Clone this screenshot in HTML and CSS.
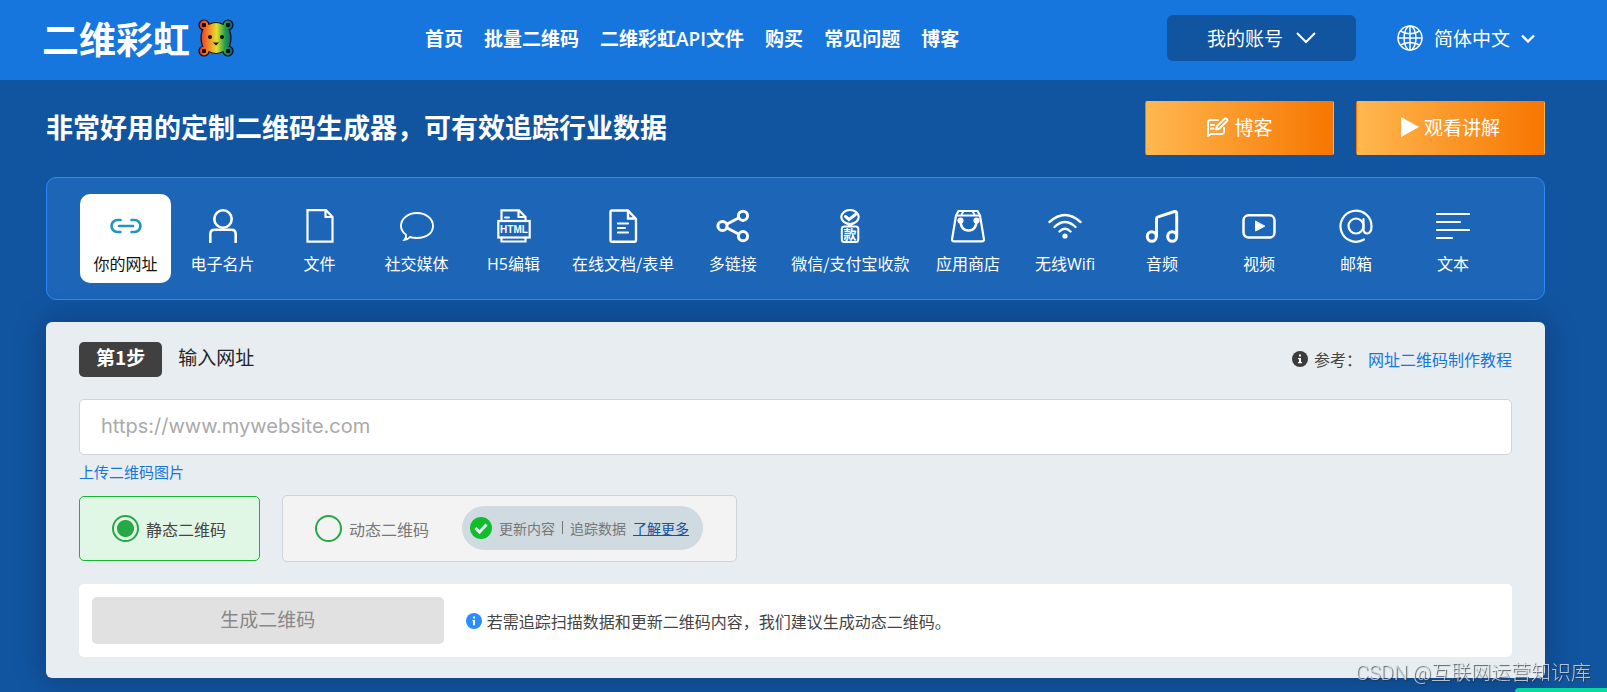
FILE: index.html
```
<!DOCTYPE html>
<html lang="zh-CN">
<head>
<meta charset="utf-8">
<meta name="viewport" content="width=device-width, initial-scale=1">
<title>二维彩虹</title>
<link rel="stylesheet" href="styles.css">
</head>
<body>
<header class="topbar">
  <a class="brand" href="#">
    <span>二维彩虹</span>
    <svg class="bear" viewBox="0 0 36 38" aria-hidden="true">
      <defs>
        <linearGradient id="rainbow" gradientUnits="userSpaceOnUse" x1="0" y1="0" x2="36" y2="0">
          <stop offset="0.08" stop-color="#ee3a24"/>
          <stop offset="0.3" stop-color="#f5882a"/>
          <stop offset="0.52" stop-color="#e3e02a"/>
          <stop offset="0.75" stop-color="#1fa04a"/>
          <stop offset="0.95" stop-color="#1c4f96"/>
        </linearGradient>
      </defs>
      <g fill="url(#rainbow)" stroke="#111" stroke-width="1.2">
        <circle cx="6" cy="6" r="5"/><circle cx="30" cy="6" r="5"/>
        <circle cx="6" cy="32" r="5"/><circle cx="30" cy="32" r="5"/>
      </g>
      <path d="M18 3.500C23 3.500 26 5 28.500 8.500C32 12 33 15 33 19C33 23 32 26 28.500 30C26 33.500 23 34.500 18 34.500C13 34.500 10 33.500 7.500 30C4 26 3 23 3 19C3 15 4 12 7.500 8.500C10 5 13 3.500 18 3.500Z" fill="url(#rainbow)"/>
      <path d="M10.500 5.500Q18 1.500 25.500 5.500M10.500 32.500Q18 36.500 25.500 32.500M4.500 11Q1.500 19 4.500 27M31.500 11Q34.500 19 31.500 27" fill="none" stroke="#111" stroke-width="1.200"/>
      <g fill="#111">
        <rect x="4" y="4" width="4" height="4" rx="1"/><rect x="28" y="4" width="4" height="4" rx="1"/>
        <rect x="4" y="30" width="4" height="4" rx="1"/><rect x="28" y="30" width="4" height="4" rx="1"/>
        <circle cx="12" cy="18" r="2"/><circle cx="24" cy="18" r="2"/>
        <path d="M15 23.500H21L18 26.500Z"/>
      </g>
    </svg>
  </a>
  <nav class="nav">
    <a href="#">首页</a>
    <a href="#">批量二维码</a>
    <a href="#">二维彩虹<span class="latin">API</span>文件</a>
    <a href="#">购买</a>
    <a href="#">常见问题</a>
    <a href="#">博客</a>
  </nav>
  <div class="account">
    <button class="account-btn" type="button">我的账号
      <svg width="20" height="12" viewBox="0 0 20 12" aria-hidden="true"><path d="M1 1L10 10L19 1" fill="none" stroke="#fff" stroke-width="2"/></svg>
    </button>
    <button class="lang-btn" type="button">
      <svg width="26" height="26" viewBox="0 0 26 26" fill="none" stroke="#fff" stroke-width="1.5" aria-hidden="true">
        <circle cx="13" cy="13" r="12"/><ellipse cx="13" cy="13" rx="6" ry="12"/>
        <path d="M13 1V25M1 13H25M3.500 6C9 9.500 17 9.500 22.500 6M3.500 20C9 16.500 17 16.500 22.500 20"/>
      </svg>
      <span>简体中文</span>
      <svg width="14" height="9" viewBox="0 0 14 9" aria-hidden="true"><path d="M1 1.500L7 7.500L13 1.500" fill="none" stroke="#fff" stroke-width="2.400"/></svg>
    </button>
  </div>
</header>

<main class="page">
  <div class="hero">
    <h1>非常好用的定制二维码生成器，可有效追踪行业数据</h1>
    <div class="hero-actions">
      <button class="cta" type="button">
        <svg width="23" height="20" viewBox="0 0 23 20" fill="none" stroke="#fff" stroke-width="2" stroke-linejoin="round" stroke-linecap="round" aria-hidden="true">
          <path d="M12 3H4.500Q2 3 2 5.500V19L5 17H15.500Q18 17 18 14.500V11"/>
          <path d="M10 12.500L11 9L19 1.500Q21 1 21.500 3.500L13.500 11.500Z"/><path d="M5 8H8M5 11.500H7.500"/>
        </svg>
        博客
      </button>
      <button class="cta" type="button">
        <svg width="18" height="20" viewBox="0 0 18 20" aria-hidden="true"><path d="M0 0L18 10L0 20Z" fill="#fff"/></svg>
        观看讲解
      </button>
    </div>
  </div>

  <nav class="types">
    <a class="type active" href="#">
      <svg viewBox="0 0 34 34"><path d="M11.500 11H8.500A6 6 0 0 0 8.500 23H11.500M22.500 11H25.500A6 6 0 0 1 25.500 23H22.500M10 17H24" stroke-width="2.600"/></svg>
      <span>你的网址</span>
    </a>
    <a class="type" href="#">
      <svg viewBox="0 0 34 34"><circle cx="17" cy="10" r="8.700" stroke-width="2.600"/><path d="M4.300 34V25Q4.300 20.700 8.500 20.700H25.500Q29.700 20.700 29.700 25V34" stroke-width="2.600" stroke-linecap="butt"/></svg>
      <span>电子名片</span>
    </a>
    <a class="type" href="#">
      <svg viewBox="0 0 34 34"><path d="M4.500 1.200H23L29.500 8V32.700H4.500ZM22.500 1.500V8H29" stroke-width="2.200"/></svg>
      <span>文件</span>
    </a>
    <a class="type" href="#">
      <svg viewBox="0 0 34 34"><path d="M17 4C26 4 33 9.500 33 17C33 24.500 26 29 17 29C14.500 29 12 28.700 10 28Q8 30.500 4.500 30.800Q6.500 28.500 6 25.700C3 23.500 1 20.500 1 17C1 9.500 8 4 17 4Z" stroke-width="1.900"/></svg>
      <span>社交媒体</span>
    </a>
    <a class="type" href="#">
      <svg viewBox="0 0 34 34"><path d="M4.500 12V1.300H22L28.500 8V12M21.500 1.500V8H28M4.500 28.500V32.500H28.500V28.500" stroke-width="2.200"/><path d="M8 8.500H12" stroke-width="2"/><rect x="1.300" y="12" width="31.400" height="16.500" stroke-width="2.200"/><text x="17" y="24" class="icon-text" font-size="10">HTML</text></svg>
      <span><span class="latin">H5</span>编辑</span>
    </a>
    <a class="type" href="#">
      <svg viewBox="0 0 34 34"><path d="M6 1.500H22L30 10V31Q30 32.700 28.500 32.700H6Q4.500 32.700 4.500 31V3Q4.500 1.500 6 1.500ZM22 2V9.500H29.500" stroke-width="2.400"/><path d="M12 14.500H22M12 19H19M12 23.500H22" stroke-width="2.200"/></svg>
      <span>在线文档/表单</span>
    </a>
    <a class="type" href="#">
      <svg viewBox="0 0 34 34"><g stroke-width="3"><circle cx="6.500" cy="17" r="4.600"/><circle cx="27" cy="6.800" r="4.600"/><circle cx="27" cy="27.200" r="4.600"/><path d="M11 15L22.500 9M11 19L22.500 25"/></g></svg>
      <span>多链接</span>
    </a>
    <a class="type" href="#">
      <svg viewBox="0 0 34 34"><ellipse cx="17" cy="8" rx="8.700" ry="7"/><path d="M12.500 7.500L16 10.500L22.500 5.500" stroke-width="3"/><path d="M14 14.500L17 17.500L20 14.500" stroke-width="1.500"/><rect x="8.800" y="17.500" width="16.500" height="15.500" rx="2.500" stroke-width="2"/><text x="17" y="30" class="icon-text" font-size="13">款</text></svg>
      <span>微信/支付宝收款</span>
    </a>
    <a class="type" href="#">
      <svg viewBox="0 0 34 34"><path d="M7.500 2H26.500L29 6.500L33 30.500Q33 32.300 31 32.300H3Q1 32.300 1 30.500L5 6.500Z" stroke-width="2.200"/><path d="M6 6.500H10L12 3M22 3L24 6.500H28M11 6.500H23" stroke-width="1.800"/><path d="M9.500 11C9.500 17.500 12 21.500 17.500 21.500C23 21.500 25.500 17.500 25.500 11" stroke-width="2.500"/><circle cx="9.500" cy="11.500" r="2" fill="currentColor"/><circle cx="25.500" cy="11.500" r="2" fill="currentColor"/></svg>
      <span>应用商店</span>
    </a>
    <a class="type" href="#">
      <svg viewBox="0 0 34 34"><path d="M1.500 13Q17 -1 32.500 13M6.500 18Q17 8 27.500 18M11.500 22.500Q17 17 22.500 22.500" stroke-width="2.400"/><circle cx="17" cy="27" r="2.600" fill="currentColor" stroke="none"/></svg>
      <span>无线<span class="latin">Wifi</span></span>
    </a>
    <a class="type" href="#">
      <svg viewBox="0 0 34 34"><g stroke-width="3"><ellipse cx="6.800" cy="27.500" rx="4.500" ry="4.800"/><ellipse cx="27.200" cy="27.500" rx="4.500" ry="4.800"/><path d="M11.500 27V10Q11.500 8.300 13 7.800L29.500 2.500Q31.700 2 31.700 4.500V27"/></g></svg>
      <span>音频</span>
    </a>
    <a class="type" href="#">
      <svg viewBox="0 0 34 34"><rect x="1.500" y="6.300" width="31" height="22.200" rx="5" stroke-width="2.500"/><path d="M13.500 12.500V22L22.500 17.300Z" fill="currentColor" stroke-width="1"/></svg>
      <span>视频</span>
    </a>
    <a class="type" href="#">
      <svg viewBox="0 0 34 34"><circle cx="17" cy="17" r="7.500"/><path d="M24.500 10V20Q24.500 24.500 28.500 24.500Q32.500 24 32.500 17A15.500 15.500 0 1 0 25 30.500"/></svg>
      <span>邮箱</span>
    </a>
    <a class="type" href="#">
      <svg viewBox="0 0 34 34"><path d="M1 5H33M1 13H24M1 21H33M1 29H16"/></svg>
      <span>文本</span>
    </a>
  </nav>

  <form class="card">
    <div class="card-head">
      <strong class="step">第1步</strong>
      <label class="step-title" for="url">输入网址</label>
      <p class="reference">
        <svg width="16" height="16" viewBox="0 0 16 16" aria-hidden="true"><circle cx="8" cy="8" r="8" fill="#3c3c3c"/><path d="M7 3.500H9V5.500H7ZM6 7H9V11H10V12.300H6V11H7V8.200H6Z" fill="#fff"/></svg>
        <span>参考：</span>
        <a href="#">网址二维码制作教程</a>
      </p>
    </div>
    <input class="url" id="url" type="text" placeholder="https://www.mywebsite.com">
    <a class="upload" href="#">上传二维码图片</a>
    <div class="modes">
      <label class="mode static"><input type="radio" name="mode" checked><span>静态二维码</span></label>
      <div class="mode dynamic">
        <label class="mode-label"><input type="radio" name="mode"><span>动态二维码</span></label>
        <div class="pill">
          <svg width="22" height="22" viewBox="0 0 22 22" aria-hidden="true"><circle cx="11" cy="11" r="11" fill="#10be2c"/><path d="M5.500 11L9.500 15L16.500 7.500" fill="none" stroke="#e9f0f3" stroke-width="3"/></svg>
          <span>更新内容</span><span class="bar"></span><span>追踪数据</span>
          <a href="#">了解更多</a>
        </div>
      </div>
    </div>
    <div class="generate">
      <button class="generate-btn" type="button" disabled>生成二维码</button>
      <p class="hint">
        <svg width="16" height="16" viewBox="0 0 16 16" aria-hidden="true"><circle cx="8" cy="8" r="8" fill="#2a8cff"/><path d="M7 3.500H9V5.500H7ZM6.500 7H9V12.300H7V8.200H6.500Z" fill="#fff"/></svg>
        <span>若需追踪扫描数据和更新二维码内容，我们建议生成动态二维码。</span>
      </p>
    </div>
  </form>
</main>
<div class="chat-tab"></div>
<div class="watermark">CSDN @互联网运营知识库</div>
</body>
</html>
```
FILE: styles.css
```
* {
  box-sizing: border-box;
}

body {
  margin: 0;
  min-height: 100vh;
  overflow: hidden;
  background: #1154a0;
  color: #fff;
  font-family: "Noto Sans CJK SC", sans-serif;
  font-size: 16px;
  line-height: 22px;
}

a {
  color: inherit;
  text-decoration: none;
}

button {
  border: 0;
  color: inherit;
  font: inherit;
}

p,
h1 {
  margin: 0;
}

svg {
  flex: none;
}

.latin {
  font-family: "Open Sans", sans-serif;
  font-weight: 400;
  line-height: 1;
}

.nav .latin {
  font-weight: 600;
}

.topbar {
  display: flex;
  align-items: center;
  height: 80px;
  padding: 0 72px 4px 42px;
  background: #1775de;
}

.brand {
  display: flex;
  align-items: center;
  gap: 8px;
  font-size: 37px;
  font-weight: 700;
  line-height: 50px;
}

.bear {
  width: 36px;
  height: 38px;
}

.nav {
  display: flex;
  gap: 21px;
  margin-left: 191px;
  font-size: 19px;
  font-weight: 700;
  line-height: 28px;
  white-space: nowrap;
}

.account {
  display: flex;
  align-items: center;
  gap: 41px;
  margin-left: auto;
  font-size: 19px;
  line-height: 28px;
}

.account-btn {
  display: flex;
  align-items: center;
  justify-content: center;
  gap: 13px;
  width: 189px;
  height: 46px;
  padding: 0;
  border-radius: 6px;
  background: #1154a0;
}

.lang-btn {
  display: flex;
  align-items: center;
  gap: 11px;
  padding: 0;
  background: none;
}

.page {
  padding: 21px 62px 14px 46px;
}

.hero {
  display: flex;
  align-items: center;
  justify-content: space-between;
}

h1 {
  padding-bottom: 2px;
  font-size: 27px;
  font-weight: 700;
  line-height: 40px;
}

.hero-actions {
  display: flex;
  gap: 22px;
}

.cta {
  display: flex;
  align-items: center;
  justify-content: center;
  gap: 5px;
  width: 189px;
  height: 54px;
  padding: 0 0 2px;
  border: 1px solid transparent;
  border-radius: 2px;
  background: linear-gradient(90deg, #ffb850, #f77600);
  font-size: 19px;
}

.types {
  display: flex;
  gap: 6px;
  margin-top: 22px;
  padding: 16px 33px;
  border: 1px solid #2b8af5;
  border-radius: 10px;
  background: #1c65b7;
  white-space: nowrap;
}

.type {
  display: flex;
  flex-direction: column;
  align-items: center;
  gap: 9px;
  min-width: 91px;
  padding: 15px 7px 9px;
  border-radius: 10px;
}

.type > svg {
  width: 34px;
  height: 34px;
  fill: none;
  stroke: currentColor;
  stroke-linecap: round;
  stroke-width: 2.2;
}

.type.active {
  background: #fff;
  color: #111;
}

.type.active > svg {
  color: #2196c3;
}

.type .icon-text {
  fill: currentColor;
  stroke: none;
  font-family: "Liberation Sans", "Noto Sans CJK SC", sans-serif;
  font-weight: 700;
  text-anchor: middle;
}

.card {
  margin-top: 22px;
  padding: 20px 33px 21px;
  border-radius: 6px;
  background: #e8edf1;
  box-shadow: 0 0 32px rgba(0, 0, 0, 0.25);
  color: #444;
}

.card-head {
  display: flex;
  align-items: center;
}

.step {
  height: 35px;
  padding: 0 17px;
  border-radius: 5px;
  background: #404040;
  color: #fff;
  font-size: 19px;
  line-height: 29px;
}

.step-title {
  padding-bottom: 6px;
  margin-left: 16px;
  color: #212529;
  font-size: 19px;
}

.reference {
  display: flex;
  align-items: center;
  gap: 6px;
  margin-left: auto;
  padding-bottom: 1px;
}

.reference a,
.upload {
  color: #1775de;
}

.url {
  display: block;
  width: 100%;
  height: 56px;
  margin-top: 22px;
  padding: 0 21px 2px;
  border: 1px solid #ced4da;
  border-radius: 5px;
  background: #fff;
  font-family: Inter, sans-serif;
  font-size: 20px;
}

.url::placeholder {
  color: #aaa;
}

.upload {
  display: block;
  width: fit-content;
  margin-top: 6px;
  font-size: 15px;
}

.modes {
  display: flex;
  align-items: center;
  gap: 22px;
  margin-top: 12px;
}

.mode,
.mode-label {
  display: flex;
  align-items: center;
}

.mode-label,
.static {
  gap: 7px;
}

.mode {
  padding: 0 33px 0 32px;
  border: 1px solid #d0d4d8;
  border-radius: 5px;
}

.static {
  height: 65px;
  border-color: #14b82e;
  background: #e1f7e5;
}

.dynamic {
  height: 67px;
  gap: 33px;
  background: #f3f3f3;
  color: #777;
}

.mode input {
  width: 27px;
  height: 27px;
  margin: 0;
  border: 2px solid #28a745;
  border-radius: 50%;
  appearance: none;
}

.mode input:checked {
  background: radial-gradient(circle, #28a745 8px, transparent 9px);
}

.pill {
  display: flex;
  align-items: center;
  gap: 7px;
  height: 44px;
  margin-bottom: 2px;
  padding: 0 14px 0 8px;
  border-radius: 22px;
  background: #cfdae1;
  font-size: 14px;
}

.pill a {
  color: #1154a0;
  text-decoration: underline;
}

.bar {
  width: 1px;
  height: 13px;
  background: #777;
}

.generate {
  display: flex;
  align-items: center;
  gap: 22px;
  margin-top: 22px;
  padding: 13px;
  border-radius: 5px;
  background: #fff;
}

.generate-btn {
  width: 25%;
  height: 47px;
  padding: 0 0 4px;
  border-radius: 5px;
  background: #e1e1e1;
  color: #888;
  font-size: 19px;
}

.hint {
  display: flex;
  align-items: center;
  gap: 5px;
}

.chat-tab {
  position: fixed;
  right: 0;
  bottom: 0;
  width: 92px;
  height: 4px;
  border-radius: 16px 0 0 0;
  background: #04dc9b;
}

.watermark {
  position: fixed;
  right: 16px;
  bottom: 5px;
  color: rgba(235, 238, 242, 0.75);
  font-family: Roboto, "Noto Sans CJK SC", sans-serif;
  font-size: 20px;
  font-weight: 300;
  line-height: 28px;
  text-shadow: 1px 1px 1px rgba(40, 50, 60, 0.8);
}
```
